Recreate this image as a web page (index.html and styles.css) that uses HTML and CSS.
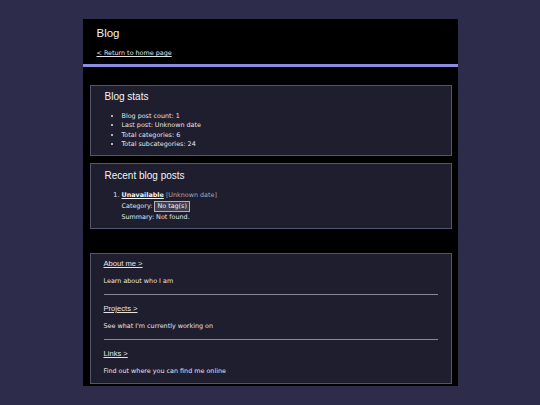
FILE: index.html
```html
<!DOCTYPE html>
<html lang="en">
<head>
<meta charset="utf-8">
<title>Blog</title>
<link rel="stylesheet" href="styles.css">
</head>
<body>
<div class="page">
  <header class="header">
    <h1 class="title">Blog</h1>
    <a class="home-link" href="#">&lt; Return to home page</a>
  </header>
  <div class="bar"></div>

  <section class="box stats">
    <h2 class="box-title">Blog stats</h2>
    <ul class="stat-list">
      <li>Blog post count: 1</li>
      <li>Last post: Unknown date</li>
      <li>Total categories: 6</li>
      <li>Total subcategories: 24</li>
    </ul>
  </section>

  <section class="box recent">
    <h2 class="box-title">Recent blog posts</h2>
    <ol class="post-list">
      <li>
        <div class="post-line"><a class="post-title" href="#">Unavailable</a> <span class="post-date">[Unknown date]</span></div>
        <div class="post-cat">Category: <span class="tag">No tag(s)</span></div>
        <div class="post-line">Summary: Not found.</div>
      </li>
    </ol>
  </section>

  <section class="box nav">
    <div class="nav-item">
      <a class="nav-link" href="#">About me &gt;</a>
      <p class="nav-desc">Learn about who I am</p>
    </div>
    <hr class="nav-rule">
    <div class="nav-item">
      <a class="nav-link" href="#">Projects &gt;</a>
      <p class="nav-desc">See what I'm currently working on</p>
    </div>
    <hr class="nav-rule">
    <div class="nav-item">
      <a class="nav-link" href="#">Links &gt;</a>
      <p class="nav-desc">Find out where you can find me online</p>
    </div>
  </section>
</div>
</body>
</html>
```
FILE: styles.css
```css
html, body {
  margin: 0;
  padding: 0;
}
body {
  background: #2d2c4b;
  font-family: "DejaVu Sans", Verdana, sans-serif;
  font-size: 6.4px;
  line-height: 9.3px;
  color: #e4e4e4;
}
.page {
  width: 375px;
  margin: 19px auto 0;
  background: #000;
  padding-bottom: 2px;
}
.header {
  padding: 7px 14px 6px;
}
.title {
  margin: 0;
  font-family: "Liberation Sans", Arial, sans-serif;
  font-weight: normal;
  font-size: 11.5px;
  line-height: 14px;
  color: #f4f4f4;
}
.home-link {
  display: block;
  margin-top: 9px;
  line-height: 9px;
  color: #e4e4e4;
}
.bar {
  height: 3px;
  background: #8b8ee0;
  margin-bottom: 18px;
}
.box {
  margin: 0 6px 0 7px;
  background: #1f1e2f;
  border: 1px solid #55546f;
}
.stats {
  padding: 5px 14px 6px;
  margin-bottom: 7px;
}
.recent {
  padding: 6px 14px 5px;
  margin-bottom: 24px;
}
.box-title {
  margin: 0;
  font-family: "Liberation Sans", Arial, sans-serif;
  font-weight: normal;
  font-size: 10px;
  line-height: 12px;
  color: #f4f4f4;
}
.stat-list {
  margin: 9px 0 0;
  padding-left: 17px;
}
.post-list {
  margin: 9px 0 0;
  padding-left: 17px;
}
.post-title {
  font-weight: bold;
  color: #f4f4f4;
}
.post-date {
  color: #a8a8b0;
}
.post-cat {
  line-height: 13px;
}
.tag {
  display: inline-block;
  padding: 0 2px;
  line-height: 9px;
  border: 1px solid #b0b0b8;
  background: #3e3e4e;
  color: #f4f4f4;
}
.nav {
  padding: 5px 13px 7px 13px;
}
.nav-link {
  display: block;
  font-family: "Liberation Sans", Arial, sans-serif;
  font-size: 7.6px;
  line-height: 10px;
  color: #e4e4e4;
}
.nav-desc {
  margin: 7px 0 0;
  line-height: 10px;
}
.nav-rule {
  margin: 8px 0 9px;
  border: 0;
  height: 1px;
  background: #8a899a;
}
```
